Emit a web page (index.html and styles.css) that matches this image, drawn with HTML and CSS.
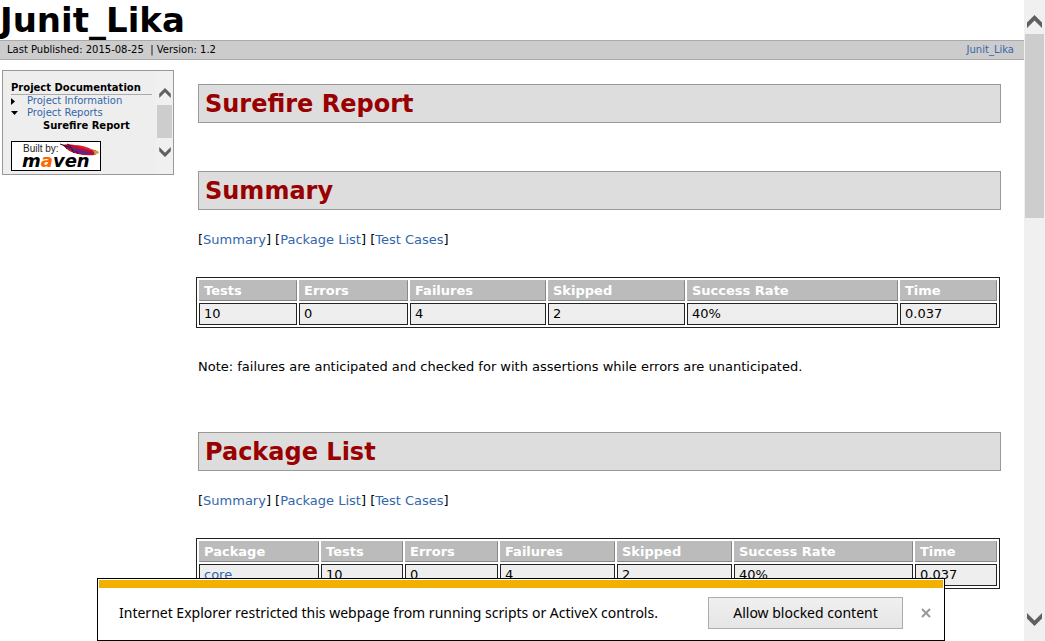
FILE: index.html
```html
<!DOCTYPE html>
<html lang="en">
<head>
<meta charset="utf-8">
<title>Junit_Lika - Surefire Report</title>
<link rel="stylesheet" href="styles.css">
</head>
<body class="window">
<div class="document">
  <header>
    <div class="banner">Junit_Lika</div>
    <div class="breadcrumbs">
      <span class="published">Last Published: 2015-08-25 &nbsp;| Version: 1.2</span>
      <a href="#home">Junit_Lika</a>
    </div>
  </header>
  <div class="columns">
    <nav class="sidebar">
      <div class="menu">
        <h5 class="menu-title">Project Documentation</h5>
        <ul class="menu-list">
          <li><svg class="marker" viewBox="0 0 7 7"><path d="M0 0v7l4-3.500z"/></svg><a href="#info">Project Information</a></li>
          <li><svg class="marker" viewBox="0 0 7 7"><path d="M0 1h7l-3.500 4z"/></svg><a href="#reports">Project Reports</a></li>
          <li class="current">Surefire Report</li>
        </ul>
        <a class="badge" href="#maven" aria-label="Built by Maven">
          <svg viewBox="0 0 90 30" width="90" height="30">
            <rect x=".5" y=".5" width="89" height="29" fill="#fff" stroke="#000"/>
            <text class="badge-small" x="12" y="11">Built by:</text>
            <path d="M51 4q8-2 16 1t17 4l3 2-3 3q-10 1-17-1-9-2-12-6z" fill="#c01030"/>
            <path d="M54 5q8 1 15 4l13 3q-9 2-15 0t-13-7z" fill="#66208a"/>
            <path d="M49 3l12 4M53 4l3 4M60 5l-4-2M63 12l-2-4M67 13l-2-3" fill="none" stroke="#301030" stroke-width="1"/>
            <path d="M63 4q10 0 19 5l-6-1q-9-2-13-4z" fill="#e02030"/>
            <path d="M81 9l6 1 1 2-5 2q1-3-2-5z" fill="#c9a23a"/>
            <text class="badge-name" x="11" y="26">m<tspan class="badge-accent">a</tspan>ven</text>
          </svg>
        </a>
      </div>
      <div class="scroll scroll-small">
        <svg class="arrow" viewBox="0 0 15 13"><path d="M0 7.500L7.500 0 15 7.500V13L7.500 5.500 0 13z"/></svg>
        <div class="thumb"></div>
        <svg class="arrow" viewBox="0 0 15 13"><path d="M0 0l7.500 7.500L15 0v5.500L7.500 13 0 5.500z"/></svg>
      </div>
    </nav>
    <main class="content">
      <section class="section">
        <h2 class="heading">Surefire Report</h2>
      </section>
      <section class="section" id="summary">
        <h2 class="heading">Summary</h2>
        <p class="links">[<a href="#summary">Summary</a>] [<a href="#packages">Package List</a>] [<a href="#cases">Test Cases</a>]</p>
        <table class="report summary-table">
          <thead><tr><th>Tests</th><th>Errors</th><th>Failures</th><th>Skipped</th><th>Success Rate</th><th>Time</th></tr></thead>
          <tbody><tr><td>10</td><td>0</td><td>4</td><td>2</td><td>40%</td><td>0.037</td></tr></tbody>
        </table>
        <p class="note">Note: failures are anticipated and checked for with assertions while errors are unanticipated.</p>
      </section>
      <section class="section" id="packages">
        <h2 class="heading">Package List</h2>
        <p class="links">[<a href="#summary">Summary</a>] [<a href="#packages">Package List</a>] [<a href="#cases">Test Cases</a>]</p>
        <table class="report package-table">
          <thead><tr><th>Package</th><th>Tests</th><th>Errors</th><th>Failures</th><th>Skipped</th><th>Success Rate</th><th>Time</th></tr></thead>
          <tbody><tr><td><a href="#core">core</a></td><td>10</td><td>0</td><td>4</td><td>2</td><td>40%</td><td>0.037</td></tr></tbody>
        </table>
      </section>
    </main>
  </div>
</div>
<div class="scroll scroll-page">
  <svg class="arrow" viewBox="0 0 15 13"><path d="M0 7.500L7.500 0 15 7.500V13L7.500 5.500 0 13z"/></svg>
  <div class="thumb"></div>
  <svg class="arrow" viewBox="0 0 15 13"><path d="M0 0l7.500 7.500L15 0v5.500L7.500 13 0 5.500z"/></svg>
</div>
<div class="notice" role="alert">
  <span class="notice-text">Internet Explorer restricted this webpage from running scripts or ActiveX controls.</span>
  <button class="allow" type="button">Allow blocked content</button>
  <button class="close" type="button" aria-label="Close"><svg viewBox="0 0 10 10" width="10" height="10"><path d="M1 1l8 8M9 1l-8 8"/></svg></button>
</div>
</body>
</html>
```
FILE: styles.css
```css
* { box-sizing: border-box; }

.window {
  display: flex;
  height: 100vh;
  margin: 0;
  overflow: hidden;
  background: #fff;
  color: #000;
  font: 13px/16px Verdana, "DejaVu Sans", sans-serif;
}

a { color: #36a; text-decoration: none; }

.document { flex: 1; min-width: 0; overflow: hidden; }

.banner {
  height: 40px;
  font-size: 34px;
  font-weight: bold;
  line-height: 40px;
}

.breadcrumbs {
  display: flex;
  justify-content: space-between;
  padding: 1px 10px 1px 7px;
  border: solid #aaa;
  border-width: 1px 0;
  background: #ccc;
  font-size: 10px;
}

.columns {
  display: flex;
  align-items: flex-start;
  gap: 24px;
  padding: 10px 23px 0 2px;
}

.sidebar {
  display: flex;
  flex: none;
  width: 172px;
  border: 1px solid #999;
  background: #eee;
  font-size: 10px;
  line-height: 12px;
}

.menu { flex: 1; padding: 11px 4px 3px 8px; }

.menu-title {
  margin: 0;
  border-bottom: 1px solid #aaa;
  font-size: 10px;
  line-height: 12px;
  white-space: nowrap;
}

.menu-list { margin: 0; padding: 0; list-style: none; }
.menu-list li { display: flex; align-items: center; gap: 9px; white-space: nowrap; }
.menu-list .current { padding: 1px 0 0 32px; font-weight: bold; }
.marker { width: 7px; height: 7px; }

.badge { display: block; height: 30px; margin-top: 9px; }
.badge svg { display: block; }
.badge-small { font: 10px "Liberation Sans", sans-serif; fill: #222; }
.badge-name { font: italic bold 18px "DejaVu Sans", sans-serif; }
.badge-accent { fill: #f60; }

.scroll {
  display: flex;
  flex: none;
  flex-direction: column;
  align-items: center;
  background: #f0f0f0;
}

.thumb { align-self: stretch; background: #cdcdcd; }
.arrow { fill: #606060; }

.scroll-small { width: 17px; padding: 17px 1px; }
.scroll-small .arrow { width: 12px; height: 10px; }
.scroll-small .thumb { height: 33px; margin: 7px 0 auto; }

.scroll-page { width: 21px; padding: 15px 1px; }
.scroll-page .arrow { width: 15px; height: 13px; }
.scroll-page .thumb { height: 184px; margin: 6px 0 auto; }

.content { flex: 1; min-width: 0; padding-top: 14px; }
.section { margin-bottom: 48px; }

.heading {
  margin: 0;
  padding: 4px 6px 3px;
  border: 1px solid #999;
  background: #ddd;
  color: #900;
  font-size: 24px;
  line-height: 30px;
}

.links { margin: 22px 0 29px; }
.note { margin: 31px 0 57px; }

.report {
  width: calc(100% - 2px);
  margin-left: -2px;
  border: 1px solid #222;
  border-spacing: 2px;
  table-layout: fixed;
}

.report th,
.report td {
  height: 22px;
  padding: 2px 4px;
  border: 1px solid #222;
  background: #eee;
  line-height: 16px;
  text-align: left;
}

.report th {
  height: 21px;
  padding-bottom: 1px;
  border-color: #bbb #888 #888 #bbb;
  background: #bbb;
  color: #fff;
}

.summary-table th:nth-child(1) { width: 98px; }
.summary-table th:nth-child(2) { width: 109px; }
.summary-table th:nth-child(3) { width: 136px; }
.summary-table th:nth-child(4) { width: 137px; }
.summary-table th:nth-child(5) { width: 211px; }
.summary-table th:nth-child(6) { width: 97px; }

.package-table th:nth-child(1) { width: 120px; }
.package-table th:nth-child(2) { width: 82px; }
.package-table th:nth-child(3) { width: 93px; }
.package-table th:nth-child(4) { width: 115px; }
.package-table th:nth-child(5) { width: 115px; }
.package-table th:nth-child(6) { width: 179px; }
.package-table th:nth-child(7) { width: 82px; }

.notice {
  position: fixed;
  right: 100px;
  bottom: 0;
  left: 97px;
  display: flex;
  align-items: center;
  padding: 18px 13px 11px 21px;
  border: 1px solid #000;
  background: linear-gradient(#f2b000, #f2b000) 1px 1px / calc(100% - 2px) 8px no-repeat #fff;
  font: 14px/20px "Segoe UI", "Noto Sans", sans-serif;
}

.notice-text { flex: 1; white-space: nowrap; }

.allow {
  width: 195px;
  height: 32px;
  padding: 0;
  border: 1px solid #acacac;
  background: linear-gradient(#f0f0f0, #e5e5e5);
  color: #000;
  font: inherit;
}

.close {
  display: flex;
  margin-left: 18px;
  padding: 0;
  border: 0;
  background: none;
}

.close path { fill: none; stroke: #999; stroke-width: 2; }
```
